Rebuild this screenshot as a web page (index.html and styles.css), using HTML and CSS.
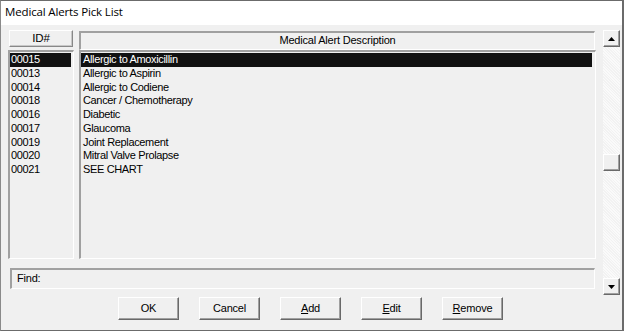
FILE: index.html
```html
<!DOCTYPE html>
<html>
<head>
<meta charset="utf-8">
<link rel="stylesheet" href="styles.css">
</head>
<body>
<div class="window">
  <div class="titlebar">Medical Alerts Pick List</div>
  <div class="client">
    <div class="main">
      <div class="grid">
        <div class="hdr hdr-id">ID#</div>
        <div class="hdr hdr-desc">Medical Alert Description</div>
        <div class="list list-id">
          <div class="row sel">00015</div>
          <div class="row">00013</div>
          <div class="row">00014</div>
          <div class="row">00018</div>
          <div class="row">00016</div>
          <div class="row">00017</div>
          <div class="row">00019</div>
          <div class="row">00020</div>
          <div class="row">00021</div>
        </div>
        <div class="list list-desc">
          <div class="row sel">Allergic to Amoxicillin</div>
          <div class="row">Allergic to Aspirin</div>
          <div class="row">Allergic to Codiene</div>
          <div class="row">Cancer / Chemotherapy</div>
          <div class="row">Diabetic</div>
          <div class="row">Glaucoma</div>
          <div class="row">Joint Replacement</div>
          <div class="row">Mitral Valve Prolapse</div>
          <div class="row">SEE CHART</div>
        </div>
      </div>
      <div class="find">Find:</div>
      <div class="buttons">
        <div class="btn">OK</div>
        <div class="btn">Cancel</div>
        <div class="btn"><u>A</u>dd</div>
        <div class="btn"><u>E</u>dit</div>
        <div class="btn"><u>R</u>emove</div>
      </div>
    </div>
    <div class="scrollbar">
      <div class="sb-btn"><svg width="7" height="4" viewBox="0 0 7 4"><path d="M0 4 L3.5 0 L7 4 Z" fill="#000"/></svg></div>
      <div class="sb-track">
        <div class="sb-thumb"></div>
      </div>
      <div class="sb-btn"><svg width="7" height="4" viewBox="0 0 7 4"><path d="M0 0 L7 0 L3.5 4 Z" fill="#000"/></svg></div>
    </div>
  </div>
</div>
</body>
</html>
```

FILE: styles.css
```css
* { box-sizing: border-box; }
html, body { margin: 0; padding: 0; }
body {
  width: 624px;
  height: 331px;
  background: #f0f0f0;
  font-family: "Liberation Sans", Arial, sans-serif;
  font-size: 11px;
  color: #000;
  overflow: hidden;
}
.window {
  width: 624px;
  height: 331px;
  border-left: 1px solid #8a8a8a;
  border-right: 2px solid #6b6b6b;
  border-bottom: 1px solid #6b6b6b;
  border-top: 1px solid #6b6b6b;
  background: #f0f0f0;
  display: flex;
  flex-direction: column;
}
.titlebar {
  height: 24px;
  background: #fff;
  font-family: "Open Sans", "Noto Sans", sans-serif;
  font-size: 11.5px;
  letter-spacing: -0.15px;
  line-height: 22px;
  padding-left: 4px;
  flex: none;
}
.client {
  flex: 1;
  display: flex;
  padding-left: 7px;
}
.main {
  width: 589px;
  display: flex;
  flex-direction: column;
}
.grid {
  display: grid;
  grid-template-columns: 66px 517px;
  column-gap: 5px;
  grid-template-rows: 20px 209px;
  margin-top: 5px;
}
.hdr {
  text-align: center;
  line-height: 15px;
  letter-spacing: -0.2px;
}
.hdr-id {
  margin-left: 1px;
  width: 64px;
  height: 17px;
  border-top: 1px solid #fff;
  border-left: 1px solid #fff;
  border-right: 1px solid #888;
  border-bottom: 1px solid #888;
  box-shadow: inset -1px -1px 0 #c8c8c8;
  font-size: 11.5px;
}
.hdr-desc {
  margin-top: 1px;
  height: 19px;
  width: 516px;
  border-top: 2px solid #a0a0a0;
  border-left: 2px solid #a0a0a0;
  border-right: 1px solid #fff;
  border-bottom: 1px solid #fff;
  line-height: 15px;
}
.list {
  border-top: 2px solid #a0a0a0;
  border-left: 2px solid #a0a0a0;
  border-right: 1px solid #fff;
  border-bottom: 1px solid #fff;
  padding: 1px 1px 0 0;
}
.row {
  height: 13.75px;
  line-height: 13.75px;
  padding-left: 1px;
  white-space: nowrap;
  letter-spacing: -0.35px;
}
.list-desc .row { padding-left: 2px; margin-right: 2px; }
.row.sel {
  background: #111;
  color: #fff;
}
.list-id .row.sel { margin-right: 1px; }
.find {
  margin-top: 9px;
  margin-left: 2px;
  width: 585px;
  height: 21px;
  border-top: 2px solid #a0a0a0;
  border-left: 2px solid #a0a0a0;
  border-right: 1px solid #fff;
  border-bottom: 1px solid #fff;
  line-height: 17px;
  padding-left: 5px;
  letter-spacing: -0.2px;
}
.buttons {
  display: flex;
  gap: 20px;
  margin-top: 8px;
  margin-left: 110px;
}
.btn {
  width: 61px;
  height: 23px;
  border-top: 1px solid #fff;
  border-left: 1px solid #fff;
  border-right: 1px solid #696969;
  border-bottom: 1px solid #696969;
  box-shadow: inset -1px -1px 0 #a0a0a0;
  text-align: center;
  line-height: 20px;
  letter-spacing: -0.2px;
}
.scrollbar {
  margin-left: 6px;
  margin-top: 5px;
  width: 17px;
  height: 265px;
  display: flex;
  flex-direction: column;
  background-color: #f7f7f7;
  background-image: repeating-linear-gradient(45deg, #f2f2f2 0 1px, #fafafa 1px 2px);
}
.sb-btn {
  width: 17px;
  height: 17px;
  background: #f0f0f0;
  border-top: 1px solid #fff;
  border-left: 1px solid #fff;
  border-right: 1px solid #696969;
  border-bottom: 1px solid #696969;
  box-shadow: inset -1px -1px 0 #a0a0a0;
  display: flex;
  align-items: center;
  justify-content: center;
  flex: none;
}
.sb-track {
  flex: 1;
  padding-top: 107px;
}
.sb-thumb {
  width: 17px;
  height: 17px;
  background: #f0f0f0;
  border-top: 1px solid #fff;
  border-left: 1px solid #fff;
  border-right: 1px solid #696969;
  border-bottom: 1px solid #696969;
  box-shadow: inset -1px -1px 0 #a0a0a0;
}
```
